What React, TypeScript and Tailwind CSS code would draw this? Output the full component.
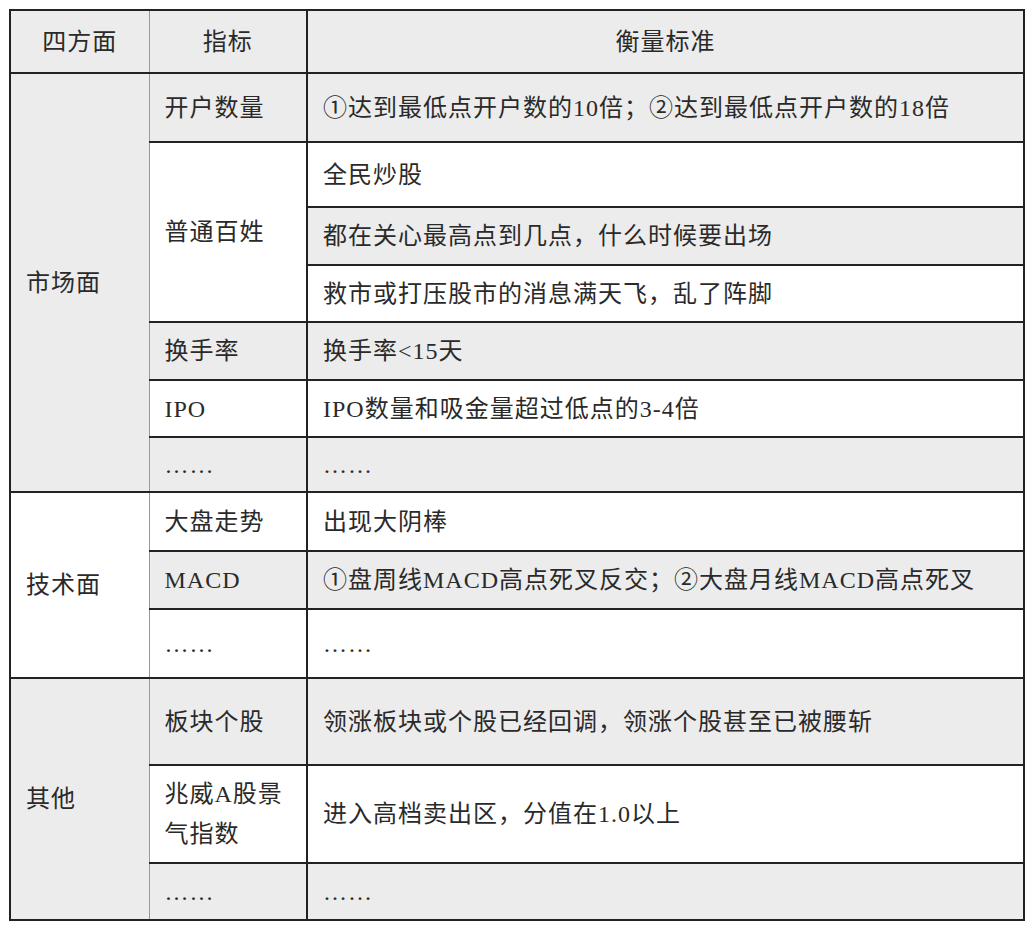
const grey = "bg-[#ececec]";
const white = "bg-white";

type Row = {
  h: string;
  group?: { text: string; span: number; bg: string };
  indicator?: { text: React.ReactNode; span: number; bg: string; lh?: string };
  standard: { text: string; bg: string };
};

const rows: Row[] = [
  {
    h: "h-[69px]",
    group: { text: "市场面", span: 7, bg: grey },
    indicator: { text: "开户数量", span: 1, bg: grey },
    standard: { text: "①达到最低点开户数的10倍；②达到最低点开户数的18倍", bg: grey },
  },
  {
    h: "h-[65px]",
    indicator: { text: "普通百姓", span: 3, bg: white },
    standard: { text: "全民炒股", bg: white },
  },
  { h: "h-[58px]", standard: { text: "都在关心最高点到几点，什么时候要出场", bg: grey } },
  { h: "h-[57px]", standard: { text: "救市或打压股市的消息满天飞，乱了阵脚", bg: white } },
  {
    h: "h-[58px]",
    indicator: { text: "换手率", span: 1, bg: grey },
    standard: { text: "换手率<15天", bg: grey },
  },
  {
    h: "h-[57px]",
    indicator: { text: "IPO", span: 1, bg: white },
    standard: { text: "IPO数量和吸金量超过低点的3-4倍", bg: white },
  },
  {
    h: "h-[55px]",
    indicator: { text: "……", span: 1, bg: grey },
    standard: { text: "……", bg: grey },
  },
  {
    h: "h-[59px]",
    group: { text: "技术面", span: 3, bg: white },
    indicator: { text: "大盘走势", span: 1, bg: white },
    standard: { text: "出现大阴棒", bg: white },
  },
  {
    h: "h-[58px]",
    indicator: { text: "MACD", span: 1, bg: grey },
    standard: { text: "①盘周线MACD高点死叉反交；②大盘月线MACD高点死叉", bg: grey },
  },
  {
    h: "h-[69px]",
    indicator: { text: "……", span: 1, bg: white },
    standard: { text: "……", bg: white },
  },
  {
    h: "h-[87px]",
    group: { text: "其他", span: 3, bg: grey },
    indicator: { text: "板块个股", span: 1, bg: grey },
    standard: { text: "领涨板块或个股已经回调，领涨个股甚至已被腰斩", bg: grey },
  },
  {
    h: "h-[98px]",
    indicator: {
      text: (
        <>
          兆威A股景
          <br />
          气指数
        </>
      ),
      span: 1,
      bg: white,
      lh: "leading-[40px]",
    },
    standard: { text: "进入高档卖出区，分值在1.0以上", bg: white },
  },
  {
    h: "h-[57px]",
    indicator: { text: "……", span: 1, bg: grey },
    standard: { text: "……", bg: grey },
  },
];

export default function App() {
  return (
    <div
      className="w-[1030px] h-[925px] bg-white pt-[9px] pl-[9px]"
      style={{ fontFamily: '"Liberation Serif", "Noto Sans CJK SC", serif' }}
    >
      <table className="w-[1016px] table-fixed border-collapse border-2 border-[#222] text-[24px] tracking-[1px] text-[#2a2a2a]">
        <colgroup>
          <col className="w-[139px]" />
          <col className="w-[158px]" />
          <col />
        </colgroup>
        <thead>
          <tr className={`h-[63px] ${grey}`}>
            <th className="font-normal text-center border-r border-r-[#999] border-b-2 border-b-[#222]">四方面</th>
            <th className="font-normal text-center border-r-2 border-r-[#222] border-b-2 border-b-[#222]">指标</th>
            <th className="font-normal text-center border-b-2 border-b-[#222]">衡量标准</th>
          </tr>
        </thead>
        <tbody>
          {rows.map((r, i) => (
            <tr key={i} className={r.h}>
              {r.group && (
                <td
                  rowSpan={r.group.span}
                  className={`${r.group.bg} align-middle pl-[15px] border-r border-r-[#999] border-b-2 border-b-[#222]`}
                >
                  {r.group.text}
                </td>
              )}
              {r.indicator && (
                <td
                  rowSpan={r.indicator.span}
                  className={`${r.indicator.bg} ${r.indicator.lh ?? ""} align-middle pl-[15px] border-r-2 border-r-[#222] border-b-2 border-b-[#222]`}
                >
                  {r.indicator.text}
                </td>
              )}
              <td className={`${r.standard.bg} align-middle pl-[15px] border-b-2 border-b-[#222]`}>
                {r.standard.text}
              </td>
            </tr>
          ))}
        </tbody>
      </table>
    </div>
  );
}
